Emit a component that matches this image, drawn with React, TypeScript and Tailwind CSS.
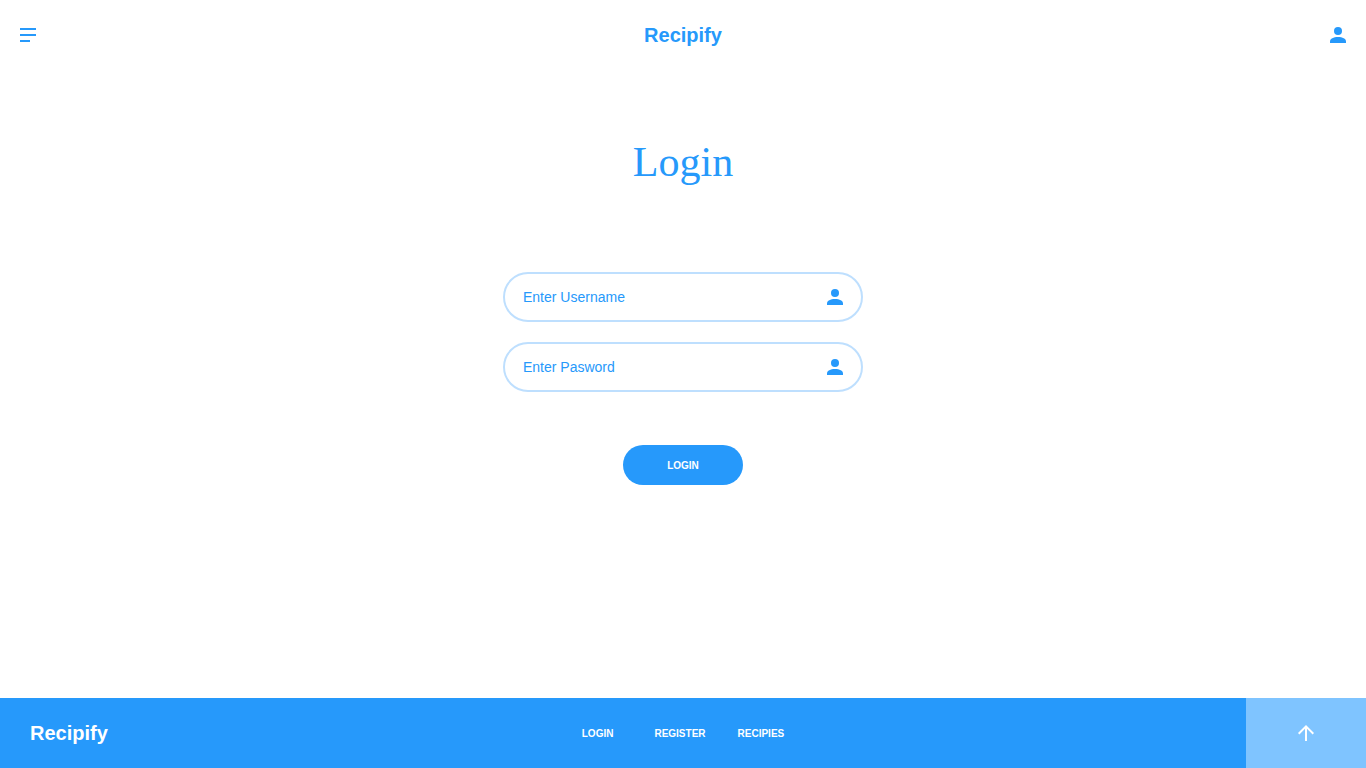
import React from "react";

function PersonIcon() {
  return (
    <svg width="16" height="16" viewBox="0 0 16 16" fill="currentColor" aria-hidden="true">
      <circle cx="8" cy="4" r="4" />
      <path d="M0 14.500C0 11.500 3.500 10 8 10C12.500 10 16 11.500 16 14.500V16H0Z" />
    </svg>
  );
}

function Field({ label, type, name }: { label: string; type: string; name: string }) {
  return (
    <label className="flex h-[50px] w-full items-center rounded-[30px] border-2 border-[#bedffe] px-[18px] text-[#2699fb]">
      <input
        type={type}
        name={name}
        aria-label={label}
        placeholder={label}
        className="min-w-0 flex-1 bg-transparent text-sm outline-none placeholder:text-[#2699fb]"
      />
      <PersonIcon />
    </label>
  );
}

export default function App() {
  return (
    <div className="flex min-h-screen flex-col bg-white font-['Liberation_Sans',Arial,sans-serif] text-[#2699fb]">
      <header className="flex h-[70px] items-center justify-between px-5">
        <button type="button" aria-label="Menu">
          <svg width="16" height="14" viewBox="0 0 16 14" fill="currentColor" aria-hidden="true">
            <path d="M0 0H16V2H0ZM0 6H16V8H0ZM0 12H10V14H0Z" />
          </svg>
        </button>
        <a href="#home" className="text-xl font-bold">Recipify</a>
        <button type="button" aria-label="Account">
          <PersonIcon />
        </button>
      </header>
      <main className="flex flex-1 flex-col items-center px-5 pt-[62px]">
        <h1 className="font-['Liberation_Serif',serif] text-[42px] leading-[60px]">Login</h1>
        <form className="flex w-full max-w-[360px] flex-col items-center gap-5 pt-20" onSubmit={(e) => e.preventDefault()}>
          <Field label="Enter Username" type="text" name="username" />
          <Field label="Enter Pasword" type="password" name="password" />
          <button type="submit" className="mt-[33px] h-10 w-[120px] rounded-full bg-[#2699fb] text-[10px] font-bold text-white">
            LOGIN
          </button>
        </form>
      </main>
      <footer className="grid h-[70px] grid-cols-[1fr_auto_1fr] items-center bg-[#2699fb] text-white">
        <a href="#home" className="justify-self-start pl-[30px] text-xl font-bold">Recipify</a>
        <nav className="flex text-[10px] font-bold">
          <a href="#login" className="mr-[41px]">LOGIN</a>
          <a href="#register" className="mr-8">REGISTER</a>
          <a href="#recipies">RECIPIES</a>
        </nav>
        <button type="button" aria-label="Back to top" className="flex h-[70px] w-[120px] items-center justify-center justify-self-end bg-[#7fc4ff]">
          <svg width="16" height="16" viewBox="0 0 16 16" fill="currentColor" aria-hidden="true">
            <path d="M8 0L0 8L1.400 9.400L7 3.800V16H9V3.800L14.600 9.400L16 8Z" />
          </svg>
        </button>
      </footer>
    </div>
  );
}
